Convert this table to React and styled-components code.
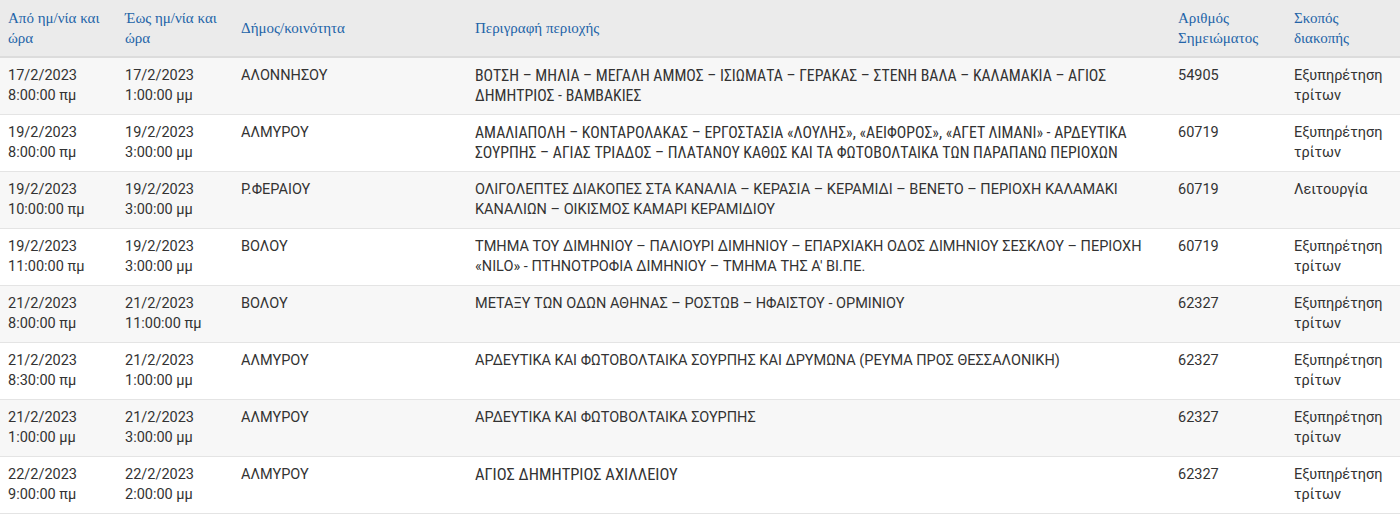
import styled, { createGlobalStyle } from "styled-components";

const colors = {
  head: "#ebebeb",
  odd: "#f7f7f7",
  even: "#ffffff",
  line: "#e4e4e4",
  link: "#2364a8",
  text: "#333333",
};

const GlobalStyle = createGlobalStyle`
  html, body {
    margin: 0;
    padding: 0;
    background: #ffffff;
  }
`;

const Table = styled.table`
  width: 1400px;
  border-collapse: collapse;
  table-layout: fixed;
  font-family: Roboto, "Noto Sans", sans-serif;
  font-size: 14.5px;
  color: ${colors.text};
`;

const HeadRow = styled.tr`
  background: ${colors.head};
  border-bottom: 2px solid #dcdcdc;
`;

const Th = styled.th`
  width: ${(p) => p.$w}px;
  padding: 8px 8px;
  text-align: left;
  vertical-align: middle;
  font-family: "Liberation Serif", "DejaVu Serif", serif;
  font-weight: normal;
  font-size: 15px;
  line-height: 20px;
  color: ${colors.link};
  box-sizing: border-box;
`;

const Row = styled.tr`
  background: ${(p) => (p.$odd ? colors.odd : colors.even)};
  border-bottom: 1px solid ${colors.line};
`;

const Td = styled.td`
  padding: 8px 8px;
  vertical-align: top;
  line-height: 20px;
  height: 40px;
`;

// some descriptions were pasted with a condensed font
const Desc = styled.div`
  line-height: 20px;
  font-stretch: ${(p) => (p.$narrow ? "87.5%" : "normal")};
  font-size: ${(p) => (p.$narrow ? `${p.$narrow}px` : "inherit")};
`;

const columns = [
  { title: "Από ημ/νία και ώρα", w: 117 },
  { title: "Έως ημ/νία και ώρα", w: 116 },
  { title: "Δήμος/κοινότητα", w: 234 },
  { title: "Περιγραφή περιοχής", w: 703 },
  { title: "Αριθμός Σημειώματος", w: 116 },
  { title: "Σκοπός διακοπής", w: 114 },
];

const rows = [
  {
    from: ["17/2/2023", "8:00:00 πμ"],
    to: ["17/2/2023", "1:00:00 μμ"],
    area: "ΑΛΟΝΝΗΣΟΥ",
    desc: "ΒΟΤΣΗ – ΜΗΛΙΑ – ΜΕΓΑΛΗ ΑΜΜΟΣ – ΙΣΙΩΜΑΤΑ – ΓΕΡΑΚΑΣ – ΣΤΕΝΗ ΒΑΛΑ – ΚΑΛΑΜΑΚΙΑ – ΑΓΙΟΣ ΔΗΜΗΤΡΙΟΣ - ΒΑΜΒΑΚΙΕΣ",
    narrow: 15.8,
    note: "54905",
    reason: "Εξυπηρέτηση τρίτων",
  },
  {
    from: ["19/2/2023", "8:00:00 πμ"],
    to: ["19/2/2023", "3:00:00 μμ"],
    area: "ΑΛΜΥΡΟΥ",
    desc: "ΑΜΑΛΙΑΠΟΛΗ – ΚΟΝΤΑΡΟΛΑΚΑΣ – ΕΡΓΟΣΤΑΣΙΑ «ΛΟΥΛΗΣ», «ΑΕΙΦΟΡΟΣ», «ΑΓΕΤ ΛΙΜΑΝΙ» - ΑΡΔΕΥΤΙΚΑ ΣΟΥΡΠΗΣ – ΑΓΙΑΣ ΤΡΙΑΔΟΣ – ΠΛΑΤΑΝΟΥ ΚΑΘΩΣ ΚΑΙ ΤΑ ΦΩΤΟΒΟΛΤΑΙΚΑ ΤΩΝ ΠΑΡΑΠΑΝΩ ΠΕΡΙΟΧΩΝ",
    narrow: 15.8,
    note: "60719",
    reason: "Εξυπηρέτηση τρίτων",
  },
  {
    from: ["19/2/2023", "10:00:00 πμ"],
    to: ["19/2/2023", "3:00:00 μμ"],
    area: "Ρ.ΦΕΡΑΙΟΥ",
    desc: "ΟΛΙΓΟΛΕΠΤΕΣ ΔΙΑΚΟΠΕΣ ΣΤΑ ΚΑΝΑΛΙΑ – ΚΕΡΑΣΙΑ – ΚΕΡΑΜΙΔΙ – ΒΕΝΕΤΟ – ΠΕΡΙΟΧΗ ΚΑΛΑΜΑΚΙ ΚΑΝΑΛΙΩΝ – ΟΙΚΙΣΜΟΣ ΚΑΜΑΡΙ ΚΕΡΑΜΙΔΙΟΥ",
    note: "60719",
    reason: "Λειτουργία",
  },
  {
    from: ["19/2/2023", "11:00:00 πμ"],
    to: ["19/2/2023", "3:00:00 μμ"],
    area: "ΒΟΛΟΥ",
    desc: "ΤΜΗΜΑ ΤΟΥ ΔΙΜΗΝΙΟΥ – ΠΑΛΙΟΥΡΙ ΔΙΜΗΝΙΟΥ – ΕΠΑΡΧΙΑΚΗ ΟΔΟΣ ΔΙΜΗΝΙΟΥ ΣΕΣΚΛΟΥ – ΠΕΡΙΟΧΗ «NILO» - ΠΤΗΝΟΤΡΟΦΙΑ ΔΙΜΗΝΙΟΥ – ΤΜΗΜΑ ΤΗΣ Α' ΒΙ.ΠΕ.",
    note: "60719",
    reason: "Εξυπηρέτηση τρίτων",
  },
  {
    from: ["21/2/2023", "8:00:00 πμ"],
    to: ["21/2/2023", "11:00:00 πμ"],
    area: "ΒΟΛΟΥ",
    desc: "ΜΕΤΑΞΥ ΤΩΝ ΟΔΩΝ ΑΘΗΝΑΣ – ΡΟΣΤΩΒ – ΗΦΑΙΣΤΟΥ - ΟΡΜΙΝΙΟΥ",
    note: "62327",
    reason: "Εξυπηρέτηση τρίτων",
  },
  {
    from: ["21/2/2023", "8:30:00 πμ"],
    to: ["21/2/2023", "1:00:00 μμ"],
    area: "ΑΛΜΥΡΟΥ",
    desc: "ΑΡΔΕΥΤΙΚΑ ΚΑΙ ΦΩΤΟΒΟΛΤΑΙΚΑ ΣΟΥΡΠΗΣ ΚΑΙ ΔΡΥΜΩΝΑ (ΡΕΥΜΑ ΠΡΟΣ ΘΕΣΣΑΛΟΝΙΚΗ)",
    note: "62327",
    reason: "Εξυπηρέτηση τρίτων",
  },
  {
    from: ["21/2/2023", "1:00:00 μμ"],
    to: ["21/2/2023", "3:00:00 μμ"],
    area: "ΑΛΜΥΡΟΥ",
    desc: "ΑΡΔΕΥΤΙΚΑ ΚΑΙ ΦΩΤΟΒΟΛΤΑΙΚΑ ΣΟΥΡΠΗΣ",
    note: "62327",
    reason: "Εξυπηρέτηση τρίτων",
  },
  {
    from: ["22/2/2023", "9:00:00 πμ"],
    to: ["22/2/2023", "2:00:00 μμ"],
    area: "ΑΛΜΥΡΟΥ",
    desc: "ΑΓΙΟΣ ΔΗΜΗΤΡΙΟΣ ΑΧΙΛΛΕΙΟΥ",
    narrow: 16.5,
    note: "62327",
    reason: "Εξυπηρέτηση τρίτων",
  },
];

function App() {
  return (
    <>
      <GlobalStyle />
      <Table>
        <thead>
          <HeadRow>
            {columns.map((c) => (
              <Th key={c.title} $w={c.w}>
                {c.title}
              </Th>
            ))}
          </HeadRow>
        </thead>
        <tbody>
          {rows.map((r, i) => (
            <Row key={i} $odd={i % 2 === 0}>
              <Td>
                {r.from[0]}
                <br />
                {r.from[1]}
              </Td>
              <Td>
                {r.to[0]}
                <br />
                {r.to[1]}
              </Td>
              <Td>{r.area}</Td>
              <Td>
                <Desc $narrow={r.narrow}>{r.desc}</Desc>
              </Td>
              <Td>{r.note}</Td>
              <Td>{r.reason}</Td>
            </Row>
          ))}
        </tbody>
      </Table>
    </>
  );
}

export default App;
